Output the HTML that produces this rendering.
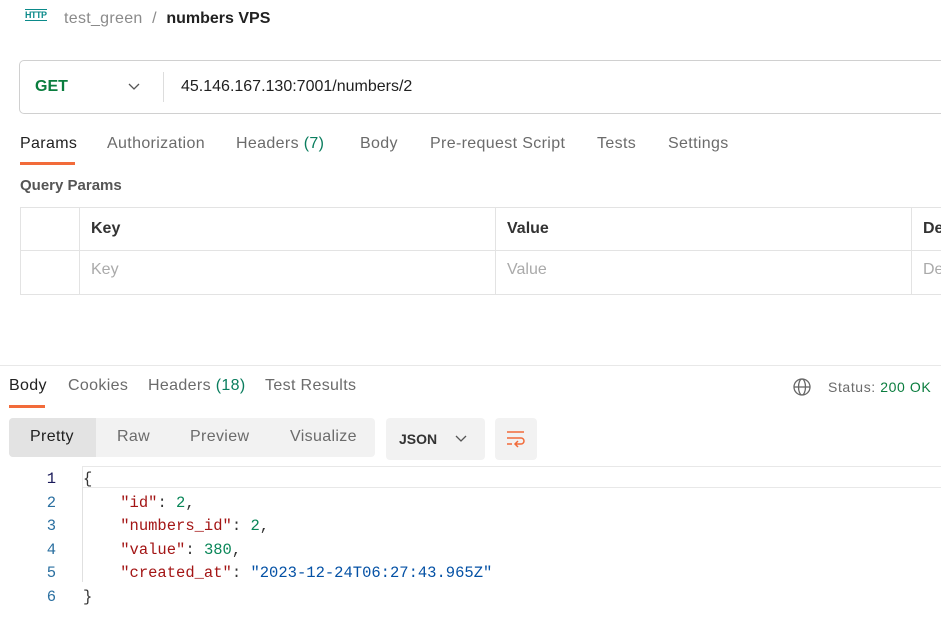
<!DOCTYPE html>
<html><head><style>
body{margin:0;width:941px;height:632px;background:#fff;font-family:"Liberation Sans",sans-serif;position:relative;overflow:hidden;color:#212121}
.a{position:absolute;white-space:nowrap}
.mono{font-family:"Liberation Mono",monospace;font-size:15.5px}
.tab{font-size:16px;color:#6b6b6b;letter-spacing:0.35px}
</style></head><body>
<div class="a" style="left:25px;top:9px;font-size:9px;color:#0b8a8a;font-weight:bold;border-top:1px solid #0b8a8a;border-bottom:1px solid #0b8a8a;line-height:10px;letter-spacing:-0.5px">HTTP</div>
<div class="a" style="left:64px;top:10px;font-size:16px;color:#8a8a8a;letter-spacing:0.3px">test_green &nbsp;/&nbsp; <span style="color:#212121;font-weight:bold;letter-spacing:0">numbers VPS</span></div>
<div class="a" style="left:19px;top:60px;width:940px;height:52px;border:1px solid #d0d0d0;border-radius:5px"></div>
<div class="a" style="left:35px;top:78px;font-size:16px;font-weight:bold;color:#0a7d3e">GET</div>
<svg class="a" style="left:127px;top:82px" width="14" height="10"><path d="M2 2l5 5 5-5" stroke="#555" fill="none" stroke-width="1.3"/></svg>
<div class="a" style="left:163px;top:72px;width:1px;height:30px;background:#ddd"></div>
<div class="a" style="left:181px;top:78px;font-size:16px">45.146.167.130:7001/numbers/2</div>
<div class="a tab" style="left:20px;top:135px;color:#212121">Params</div>
<div class="a" style="left:20px;top:162px;width:55px;height:3px;background:#f26b3a"></div>
<div class="a tab" style="left:107px;top:135px">Authorization</div>
<div class="a tab" style="left:236px;top:135px">Headers <span style="color:#0a7d5e">(7)</span></div>
<div class="a tab" style="left:360px;top:135px">Body</div>
<div class="a tab" style="left:430px;top:135px">Pre-request Script</div>
<div class="a tab" style="left:597px;top:135px">Tests</div>
<div class="a tab" style="left:668px;top:135px">Settings</div>
<div class="a" style="left:20px;top:177px;font-size:15px;font-weight:bold;color:#555">Query Params</div>
<div class="a" style="left:20px;top:207px;width:930px;height:86px;border:1px solid #e3e3e3;border-right:none"></div>
<div class="a" style="left:20px;top:250px;width:930px;height:1px;background:#e3e3e3"></div>
<div class="a" style="left:79px;top:207px;width:1px;height:87px;background:#e3e3e3"></div>
<div class="a" style="left:495px;top:207px;width:1px;height:87px;background:#e3e3e3"></div>
<div class="a" style="left:911px;top:207px;width:1px;height:87px;background:#e3e3e3"></div>
<div class="a" style="left:91px;top:220px;font-size:16px;font-weight:bold;color:#333">Key</div>
<div class="a" style="left:507px;top:220px;font-size:16px;font-weight:bold;color:#333">Value</div>
<div class="a" style="left:923px;top:220px;font-size:16px;font-weight:bold;color:#333">De</div>
<div class="a" style="left:91px;top:261px;font-size:16px;color:#aaa">Key</div>
<div class="a" style="left:507px;top:261px;font-size:16px;color:#aaa">Value</div>
<div class="a" style="left:923px;top:261px;font-size:16px;color:#aaa">De</div>
<div class="a" style="left:0;top:365px;width:941px;height:1px;background:#e8e8e8"></div>
<div class="a tab" style="left:9px;top:377px;color:#212121">Body</div>
<div class="a" style="left:9px;top:405px;width:36px;height:3px;background:#f26b3a"></div>
<div class="a tab" style="left:68px;top:377px">Cookies</div>
<div class="a tab" style="left:148px;top:377px">Headers <span style="color:#0a7d5e">(18)</span></div>
<div class="a tab" style="left:265px;top:377px">Test Results</div>
<svg class="a" style="left:792px;top:377px" width="20" height="20" fill="none" stroke="#666" stroke-width="1.3"><circle cx="10" cy="10" r="8"/><ellipse cx="10" cy="10" rx="3.5" ry="8"/><path d="M2 10h16"/></svg>
<div class="a" style="left:828px;top:379px;font-size:14px;color:#6b6b6b;letter-spacing:0.6px">Status: <span style="color:#0a7d3e">200 OK</span></div>
<div class="a" style="left:9px;top:418px;width:366px;height:39px;background:#f2f2f2;border-radius:4px"></div>
<div class="a" style="left:9px;top:418px;width:87px;height:39px;background:#e3e3e3;border-radius:4px 0 0 4px"></div>
<div class="a tab" style="left:30px;top:428px;color:#212121">Pretty</div>
<div class="a tab" style="left:117px;top:428px">Raw</div>
<div class="a tab" style="left:190px;top:428px">Preview</div>
<div class="a tab" style="left:290px;top:428px">Visualize</div>
<div class="a" style="left:386px;top:418px;width:99px;height:42px;background:#f2f2f2;border-radius:4px"></div>
<div class="a" style="left:399px;top:431px;font-size:14px;font-weight:bold;color:#333">JSON</div>
<svg class="a" style="left:454px;top:434px" width="14" height="10"><path d="M2 2l5 5 5-5" stroke="#555" fill="none" stroke-width="1.3"/></svg>
<div class="a" style="left:495px;top:418px;width:42px;height:42px;background:#f2f2f2;border-radius:4px"></div>
<svg class="a" style="left:505px;top:429px" width="22" height="20" fill="none" stroke="#f26b3a" stroke-width="1.5"><path d="M2 3h17M2 9h14a3 3 0 010 6h-5M13 12l-3 3 3 3M2 15h5"/></svg>
<div class="a" style="left:82px;top:466px;width:860px;height:20px;border:1px solid #e8e8e8;border-right:none"></div>
<div class="a" style="left:82px;top:487px;width:1px;height:95px;background:#e0e0e0"></div>
<div class="a mono" style="left:46px;top:468px;line-height:23.6px;color:#2a6fa0;text-align:right;width:10px"><span style="color:#1a1a5a">1</span><br>2<br>3<br>4<br>5<br>6</div>
<div class="a mono" style="left:83px;top:468px;line-height:23.6px;color:#333">{<br>&nbsp;&nbsp;&nbsp;&nbsp;<span style="color:#a31515">"id"</span>: <span style="color:#098658">2</span>,<br>&nbsp;&nbsp;&nbsp;&nbsp;<span style="color:#a31515">"numbers_id"</span>: <span style="color:#098658">2</span>,<br>&nbsp;&nbsp;&nbsp;&nbsp;<span style="color:#a31515">"value"</span>: <span style="color:#098658">380</span>,<br>&nbsp;&nbsp;&nbsp;&nbsp;<span style="color:#a31515">"created_at"</span>: <span style="color:#0451a5">"2023-12-24T06:27:43.965Z"</span><br>}</div>
</body></html>
